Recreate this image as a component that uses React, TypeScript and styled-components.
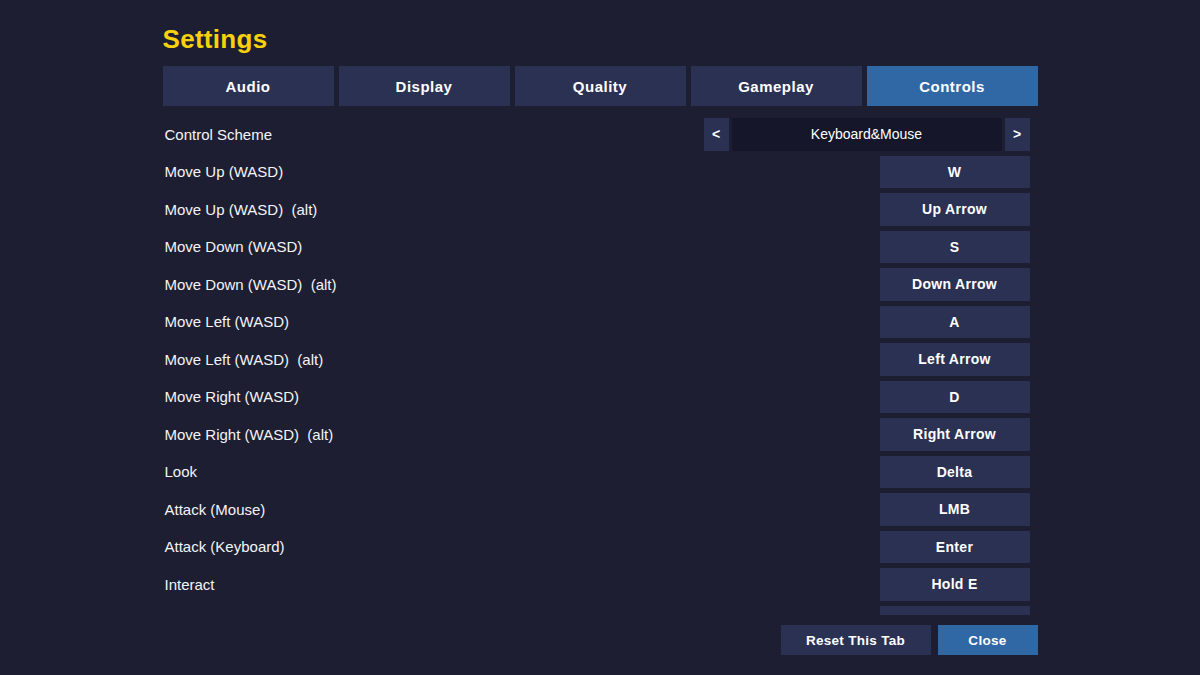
import React, { FC, useState } from "react";
import styled, { createGlobalStyle } from "styled-components";

const GlobalStyle = createGlobalStyle`
  html, body {
    margin: 0;
    padding: 0;
    background-color: #1d1e32;
  }
  body {
    font-family: "Liberation Sans", Arial, sans-serif;
    color: #ffffff;
  }
`;

const Page = styled.div`
  display: flex;
  justify-content: center;
  height: 675px;
  overflow: hidden;
  background-color: #1d1e32;
`;

const Panel = styled.div`
  display: flex;
  flex-direction: column;
  width: 875px;
  padding-top: 24px;
`;

const Title = styled.h1`
  margin: 0 0 12px 0;
  color: #f7d10b;
  font-size: 26px;
  font-weight: 700;
  line-height: 30px;
  letter-spacing: 0.3px;
`;

const TabBar = styled.div`
  display: grid;
  grid-template-columns: repeat(5, 1fr);
  gap: 5px;
  margin-bottom: 12px;
`;

const Tab = styled.button<{ $active: boolean }>`
  height: 40px;
  border: none;
  background-color: ${(p) => (p.$active ? "#3068a6" : "#2b3153")};
  color: #ffffff;
  font-family: "Liberation Sans", Arial, sans-serif;
  font-size: 15px;
  font-weight: 700;
  letter-spacing: 0.5px;
  cursor: pointer;
`;

const List = styled.div`
  display: flex;
  flex-direction: column;
  gap: 5px;
  height: 497px;
  overflow: hidden;
  padding: 0 8px 0 2px;
`;

const Row = styled.div`
  display: flex;
  align-items: center;
  justify-content: space-between;
  flex: none;
  height: 32.5px;
`;

const Label = styled.span`
  font-size: 15px;
  color: #f4f4f6;
  white-space: pre;
`;

const KeyButton = styled.button`
  width: 150px;
  height: 100%;
  border: none;
  background-color: #2b3153;
  color: #ffffff;
  font-family: "Liberation Sans", Arial, sans-serif;
  font-size: 14px;
  font-weight: 700;
  letter-spacing: 0.3px;
`;

const Scheme = styled.div`
  display: flex;
  gap: 3px;
  height: 100%;
`;

const ArrowButton = styled.button`
  width: 25px;
  height: 100%;
  padding: 0;
  border: none;
  background-color: #2b3153;
  color: #ffffff;
  font-family: "Liberation Sans", Arial, sans-serif;
  font-size: 14px;
  font-weight: 700;
`;

const SchemeValue = styled.div`
  display: flex;
  align-items: center;
  justify-content: center;
  width: 270px;
  background-color: #15162a;
  font-size: 14px;
`;

const Footer = styled.div`
  display: flex;
  justify-content: flex-end;
  gap: 7px;
  margin-top: 10px;
`;

const FooterButton = styled.button<{ $primary?: boolean; $width: number }>`
  width: ${(p) => p.$width}px;
  height: 30px;
  border: none;
  background-color: ${(p) => (p.$primary ? "#3068a6" : "#2b3153")};
  color: #ffffff;
  font-family: "Liberation Sans", Arial, sans-serif;
  font-size: 13.5px;
  font-weight: 700;
  letter-spacing: 0.3px;
`;

const TABS = ["Audio", "Display", "Quality", "Gameplay", "Controls"];

// The last entry is cut by the list's bottom edge, as in the game menu.
const BINDINGS: [string, string][] = [
  ["Move Up (WASD)", "W"],
  ["Move Up (WASD)  (alt)", "Up Arrow"],
  ["Move Down (WASD)", "S"],
  ["Move Down (WASD)  (alt)", "Down Arrow"],
  ["Move Left (WASD)", "A"],
  ["Move Left (WASD)  (alt)", "Left Arrow"],
  ["Move Right (WASD)", "D"],
  ["Move Right (WASD)  (alt)", "Right Arrow"],
  ["Look", "Delta"],
  ["Attack (Mouse)", "LMB"],
  ["Attack (Keyboard)", "Enter"],
  ["Interact", "Hold E"],
  ["Quick Save", "F5"],
];

const App: FC = () => {
  const [tab, setTab] = useState("Controls");

  return (
    <Page>
      <GlobalStyle />
      <Panel>
        <Title>Settings</Title>
        <TabBar>
          {TABS.map((t) => (
            <Tab key={t} $active={t === tab} onClick={() => setTab(t)}>
              {t}
            </Tab>
          ))}
        </TabBar>
        <List>
          <Row>
            <Label>Control Scheme</Label>
            <Scheme>
              <ArrowButton>&lt;</ArrowButton>
              <SchemeValue>Keyboard&amp;Mouse</SchemeValue>
              <ArrowButton>&gt;</ArrowButton>
            </Scheme>
          </Row>
          {BINDINGS.map(([label, key]) => (
            <Row key={label}>
              <Label>{label}</Label>
              <KeyButton>{key}</KeyButton>
            </Row>
          ))}
        </List>
        <Footer>
          <FooterButton $width={150}>Reset This Tab</FooterButton>
          <FooterButton $width={100} $primary>
            Close
          </FooterButton>
        </Footer>
      </Panel>
    </Page>
  );
};

export default App;
